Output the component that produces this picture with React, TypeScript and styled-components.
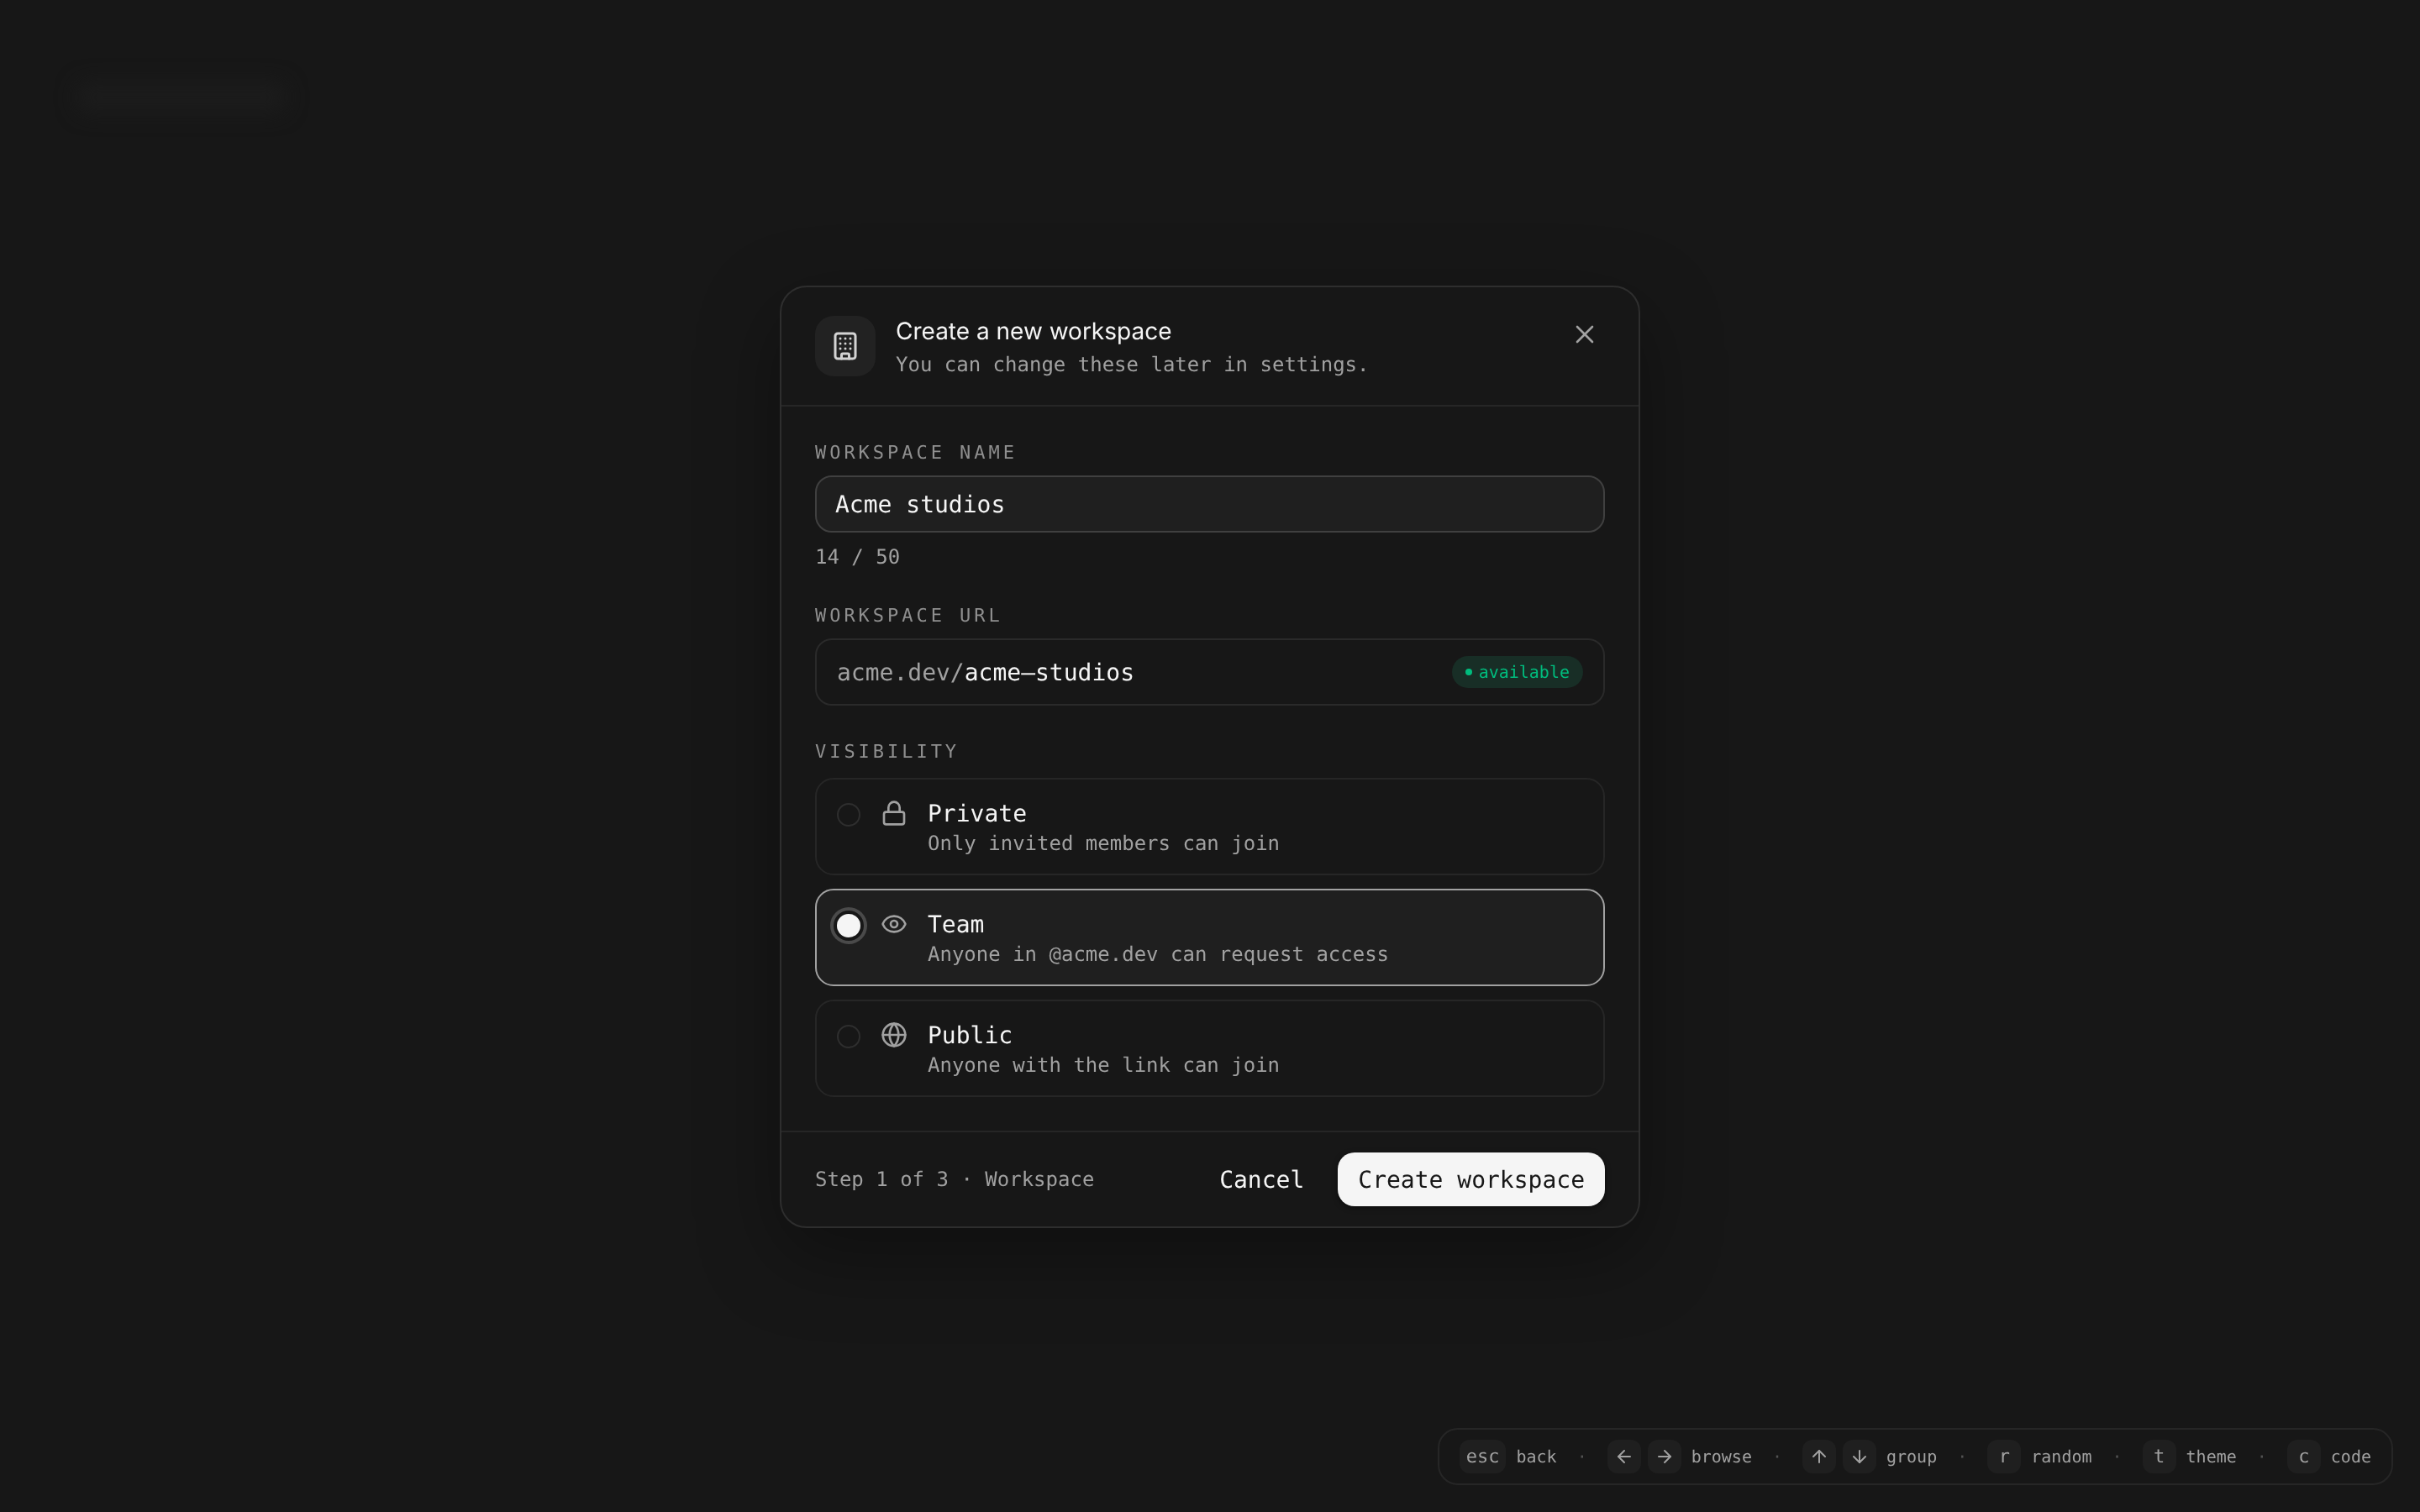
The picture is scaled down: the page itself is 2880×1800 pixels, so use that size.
import styled, { createGlobalStyle } from 'styled-components';
import { ArrowDown, ArrowLeft, ArrowRight, ArrowUp, Building, Eye, Globe, Lock, X } from 'lucide-react';
import type { ReactNode } from 'react';

const GlobalStyle = createGlobalStyle`
  * { box-sizing: border-box; }
  html, body { margin: 0; padding: 0; height: 100%; background: #171717; }
  body {
    font-family: "DejaVu Sans Mono", monospace;
    color: #f5f5f5;
    text-rendering: geometricPrecision;
  }
`;

// will-change keeps the text greyscale instead of LCD antialiased
const Page = styled.div`
  position: relative;
  width: 2880px;
  height: 1800px;
  padding-top: 2px;
  display: grid;
  place-items: center;
  overflow: hidden;
  background: #171717;
  will-change: transform;
`;

const BlurredMark = styled.div`
  position: absolute;
  left: 92px;
  top: 98px;
  width: 248px;
  height: 36px;
  border-radius: 12px;
  background: #1c1c1c;
  filter: blur(12px);
`;

const Modal = styled.div`
  width: 1024px;
  background: #171717;
  border: 2px solid #2e2e2e;
  border-radius: 32px;
  box-shadow: 0 32px 96px rgba(0, 0, 0, 0.35);
`;

const Header = styled.header`
  display: flex;
  align-items: flex-start;
  gap: 24px;
  padding: 34px 40px;
  border-bottom: 2px solid #262626;
`;

const IconTile = styled.div`
  width: 72px;
  height: 72px;
  flex: none;
  display: flex;
  align-items: center;
  justify-content: center;
  border-radius: 22px;
  background: #222222;
  color: #d4d4d4;
`;

const HeaderText = styled.div`
  flex: 1;
  display: flex;
  flex-direction: column;
  gap: 7px;
`;

const Title = styled.h2`
  margin: -1px 0 0;
  font-family: Inter, sans-serif;
  font-size: 28px;
  font-weight: 400;
  line-height: 38px;
  color: #f5f5f5;
`;

const Subtitle = styled.p`
  margin: 0;
  font-size: 24px;
  line-height: 28px;
  color: #a1a1a1;
`;

const CloseButton = styled.button`
  width: 48px;
  height: 48px;
  margin-top: -2px;
  padding: 0;
  flex: none;
  display: flex;
  align-items: center;
  justify-content: center;
  background: none;
  border: 0;
  color: #a1a1a1;
`;

const Body = styled.div`
  display: flex;
  flex-direction: column;
  gap: 42px;
  padding: 42px 40px 40px;
`;

const Field = styled.div`
  display: flex;
  flex-direction: column;
`;

const Label = styled.div<{ $gap?: number }>`
  font-size: 22px;
  line-height: 28px;
  letter-spacing: 0.18em;
  color: #8f8f8f;
  margin-bottom: ${(p) => p.$gap ?? 12}px;
`;

const NameInput = styled.div`
  height: 68px;
  padding: 0 22px;
  display: flex;
  align-items: center;
  font-size: 28px;
  background: #1f1f1f;
  border: 2px solid #404040;
  border-radius: 20px;
  color: #f5f5f5;
`;

const Counter = styled.div`
  margin-top: 14px;
  font-size: 24px;
  line-height: 30px;
  color: #a1a1a1;
`;

const UrlBox = styled.div`
  height: 80px;
  padding: 0 24px;
  display: flex;
  align-items: center;
  justify-content: space-between;
  font-size: 28px;
  border: 2px solid #2a2a2a;
  border-radius: 20px;
`;

const UrlPrefix = styled.span`
  color: #a1a1a1;
`;

const Badge = styled.span`
  height: 38px;
  padding: 0 16px;
  display: inline-flex;
  align-items: center;
  gap: 8px;
  font-size: 20px;
  border-radius: 19px;
  background: #182e26;
  color: #00bc7d;
`;

const BadgeDot = styled.i`
  width: 8px;
  height: 8px;
  border-radius: 50%;
  background: #00bc7d;
`;

const OptionList = styled.div`
  display: flex;
  flex-direction: column;
  gap: 16px;
`;

const Option = styled.div<{ $selected?: boolean }>`
  height: 116px;
  padding: 24px;
  display: flex;
  align-items: flex-start;
  gap: 24px;
  border-radius: 22px;
  border: 2px solid ${(p) => (p.$selected ? '#a1a1a1' : '#262626')};
  background: ${(p) => (p.$selected ? '#1f1f1f' : 'transparent')};
`;

const Radio = styled.span<{ $selected?: boolean }>`
  width: 28px;
  height: 28px;
  margin-top: 4px;
  flex: none;
  border-radius: 50%;
  background: ${(p) => (p.$selected ? '#f5f5f5' : 'transparent')};
  border: ${(p) => (p.$selected ? '0' : '2px solid #2e2e2e')};
  box-shadow: ${(p) => (p.$selected ? '0 0 0 4px #171717, 0 0 0 8px #4a4a4a' : 'none')};
`;

const OptionIcon = styled.span`
  width: 32px;
  height: 32px;
  flex: none;
  display: flex;
  color: #a1a1a1;
`;

const OptionText = styled.div`
  display: flex;
  flex-direction: column;
  gap: 5px;
`;

const OptionName = styled.div`
  font-size: 28px;
  line-height: 34px;
  color: #f5f5f5;
`;

const OptionDesc = styled.div`
  font-size: 24px;
  line-height: 26px;
  color: #a1a1a1;
`;

const Footer = styled.footer`
  display: flex;
  align-items: center;
  justify-content: space-between;
  padding: 24px 40px;
  border-top: 2px solid #262626;
`;

const StepText = styled.span`
  font-size: 24px;
  color: #a1a1a1;
`;

const Actions = styled.div`
  display: flex;
  gap: 16px;
`;

const Button = styled.button<{ $primary?: boolean }>`
  height: 64px;
  padding: 0 24px;
  border: 0;
  border-radius: 20px;
  font-family: inherit;
  font-size: 28px;
  text-rendering: geometricPrecision;
  color: ${(p) => (p.$primary ? '#171717' : '#f5f5f5')};
  background: ${(p) => (p.$primary ? '#f5f5f5' : 'transparent')};
  box-shadow: ${(p) => (p.$primary ? '0 2px 6px rgba(0, 0, 0, 0.5)' : 'none')};
`;

const HintBar = styled.div`
  position: absolute;
  right: 32px;
  bottom: 32px;
  height: 68px;
  padding: 0 24px;
  display: flex;
  align-items: center;
  gap: 24px;
  border: 2px solid #262626;
  border-radius: 24px;
  font-size: 20px;
  color: #a1a1a1;
`;

const HintGroup = styled.div`
  display: flex;
  align-items: center;
  gap: 24px;
`;

const Hint = styled.div`
  display: flex;
  align-items: center;
  gap: 8px;
`;

const HintLabel = styled.span`
  margin-left: 4px;
`;

const Key = styled.kbd`
  min-width: 40px;
  height: 40px;
  padding: 0 8px;
  display: flex;
  align-items: center;
  justify-content: center;
  font-family: inherit;
  font-size: 22px;
  border-radius: 12px;
  background: #1f1f1f;
  color: #a1a1a1;
`;

const ArrowKey = styled(Key)`
  padding: 0;
`;

const Separator = styled.span`
  color: #525252;
`;

const options = [
  { name: 'Private', desc: 'Only invited members can join', icon: <Lock size={32} /> },
  { name: 'Team', desc: 'Anyone in @acme.dev can request access', icon: <Eye size={32} />, selected: true },
  { name: 'Public', desc: 'Anyone with the link can join', icon: <Globe size={32} /> },
];

const hints: { keys: ReactNode[]; label: string }[] = [
  { keys: ['esc'], label: 'back' },
  { keys: [<ArrowLeft size={24} />, <ArrowRight size={24} />], label: 'browse' },
  { keys: [<ArrowUp size={24} />, <ArrowDown size={24} />], label: 'group' },
  { keys: ['r'], label: 'random' },
  { keys: ['t'], label: 'theme' },
  { keys: ['c'], label: 'code' },
];

const App = () => {
  return (
    <Page>
      <GlobalStyle />
      <BlurredMark />
      <Modal>
        <Header>
          <IconTile>
            <Building size={36} />
          </IconTile>
          <HeaderText>
            <Title>Create a new workspace</Title>
            <Subtitle>You can change these later in settings.</Subtitle>
          </HeaderText>
          <CloseButton>
            <X size={36} strokeWidth={1.75} />
          </CloseButton>
        </Header>
        <Body>
          <Field>
            <Label>WORKSPACE NAME</Label>
            <NameInput>Acme studios</NameInput>
            <Counter>14 / 50</Counter>
          </Field>
          <Field>
            <Label>WORKSPACE URL</Label>
            <UrlBox>
              <span>
                <UrlPrefix>acme.dev/</UrlPrefix>acme–studios
              </span>
              <Badge>
                <BadgeDot />
                available
              </Badge>
            </UrlBox>
          </Field>
          <Field>
            <Label $gap={16}>VISIBILITY</Label>
            <OptionList>
              {options.map((item) => (
                <Option key={item.name} $selected={item.selected}>
                  <Radio $selected={item.selected} />
                  <OptionIcon>{item.icon}</OptionIcon>
                  <OptionText>
                    <OptionName>{item.name}</OptionName>
                    <OptionDesc>{item.desc}</OptionDesc>
                  </OptionText>
                </Option>
              ))}
            </OptionList>
          </Field>
        </Body>
        <Footer>
          <StepText>Step 1 of 3 · Workspace</StepText>
          <Actions>
            <Button>Cancel</Button>
            <Button $primary>Create workspace</Button>
          </Actions>
        </Footer>
      </Modal>
      <HintBar>
        {hints.map((hint, index) => (
          <HintGroup key={hint.label}>
            {index > 0 && <Separator>·</Separator>}
            <Hint>
              {hint.keys.map((k, i) =>
                typeof k === 'string' ? <Key key={i}>{k}</Key> : <ArrowKey key={i}>{k}</ArrowKey>
              )}
              <HintLabel>{hint.label}</HintLabel>
            </Hint>
          </HintGroup>
        ))}
      </HintBar>
    </Page>
  );
};

export default App;
